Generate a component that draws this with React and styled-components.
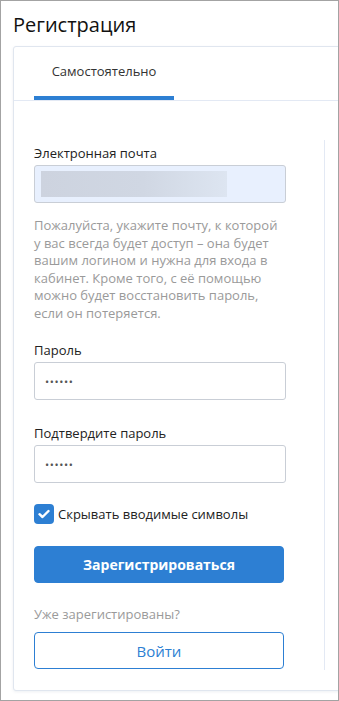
import React from 'react'
import styled, { createGlobalStyle } from 'styled-components'

const GlobalStyle = createGlobalStyle`
  * { box-sizing: border-box; }
  body {
    margin: 0;
    background: #fff;
    font-family: "Open Sans", "Noto Sans", Arial, sans-serif;
    color: #222;
  }
`

const blue = '#2d7fd3'

const App = () => {
  return (
    <>
      <GlobalStyle />
      <Window>
        <Title>Регистрация</Title>
        <Card>
          <Tabs>
            <Tab active>Самостоятельно</Tab>
          </Tabs>
          <Panel>
            <Label>Электронная почта</Label>
            <Input autofill>
              <Redacted />
            </Input>
            <Hint>
              Пожалуйста, укажите почту, к которой<br />
              у вас всегда будет доступ – она будет<br />
              вашим логином и нужна для входа в<br />
              кабинет. Кроме того, с её помощью<br />
              можно будет восстановить пароль,<br />
              если он потеряется.
            </Hint>
            <Label top={19}>Пароль</Label>
            <Input><Dots>••••••</Dots></Input>
            <Label top={24}>Подтвердите пароль</Label>
            <Input><Dots>••••••</Dots></Input>
            <CheckRow>
              <Checkbox>
                <svg width="12" height="10" viewBox="0 0 12 10">
                  <path d="M1.5 5.2 L4.5 8 L10.5 2" fill="none" stroke="#fff" strokeWidth="2.4" strokeLinecap="round" strokeLinejoin="round" />
                </svg>
              </Checkbox>
              <span>Скрывать вводимые символы</span>
            </CheckRow>
            <Button primary>Зарегистрироваться</Button>
            <Muted>Уже зарегистированы?</Muted>
            <Button>Войти</Button>
          </Panel>
        </Card>
      </Window>
    </>
  )
}

const Window = styled.div`
  width: 339px;
  height: 701px;
  border: 1px solid #a3a3a3;
  overflow: hidden;
`

const Title = styled.h1`
  margin: 0;
  padding: 11px 0 0 12px;
  height: 45px;
  font-size: 20px;
  font-weight: 400;
  line-height: 26px;
  color: #111;
`

const Card = styled.div`
  margin-left: 12px;
  width: 340px;
  height: 645px;
  border: 1px solid #e0e6ef;
  border-radius: 3px;
  box-shadow: 0 1px 3px rgba(40, 60, 100, 0.08);
  background: #fff;
`

const Tabs = styled.div`
  display: flex;
  height: 54px;
  padding-left: 20px;
  border-bottom: 1px solid #e3e9f4;
`

const Tab = styled.div`
  width: 140px;
  display: flex;
  align-items: center;
  justify-content: center;
  padding-bottom: 2px;
  font-size: 13px;
  color: #333;
  border-bottom: 4px solid ${p => (p.active ? blue : 'transparent')};
`

const Panel = styled.div`
  margin: 39px 0 0 20px;
  width: 291px;
  padding-top: 4px;
  padding-bottom: 1px;
  border-right: 1px solid #e3e9f4;
  display: flex;
  flex-direction: column;
  align-items: flex-start;
`

const Label = styled.div`
  margin-top: ${p => p.top || 0}px;
  margin-bottom: 3px;
  font-size: 13px;
  line-height: 18px;
  color: #222;
`

const Input = styled.div`
  width: 252px;
  height: 38px;
  border: 1px solid #c9ced6;
  border-radius: 3px;
  background: ${p => (p.autofill ? '#e8f0fe' : '#fff')};
  display: flex;
  align-items: center;
  padding-left: 6px;
`

const Redacted = styled.div`
  width: 186px;
  height: 26px;
  background: linear-gradient(90deg, #cdd3df 0%, #d0d7e3 55%, #dde5f1 100%);
`

const Dots = styled.span`
  font-size: 11px;
  letter-spacing: 0.6px;
  color: #555;
  padding-left: 4px;
`

const Hint = styled.p`
  margin: 14px 0 0;
  font-size: 13px;
  line-height: 17.5px;
  color: #9a9a9a;
`

const CheckRow = styled.label`
  margin-top: 21px;
  display: flex;
  align-items: center;
  gap: 4px;
  font-size: 13px;
  color: #222;
`

const Checkbox = styled.span`
  width: 20px;
  height: 20px;
  border-radius: 4px;
  background: ${blue};
  display: flex;
  align-items: center;
  justify-content: center;
`

const Button = styled.button`
  width: 250px;
  height: 37px;
  margin-top: ${p => (p.primary ? 22 : 9)}px;
  border-radius: 4px;
  border: 1px solid ${blue};
  background: ${p => (p.primary ? blue : '#fff')};
  color: ${p => (p.primary ? '#fff' : blue)};
  font-family: inherit;
  font-size: ${p => (p.primary ? 14 : 15)}px;
  font-weight: ${p => (p.primary ? 700 : 400)};
  cursor: pointer;
`

const Muted = styled.div`
  margin-top: 22px;
  font-size: 13px;
  line-height: 18px;
  color: #9a9a9a;
`

export default App
